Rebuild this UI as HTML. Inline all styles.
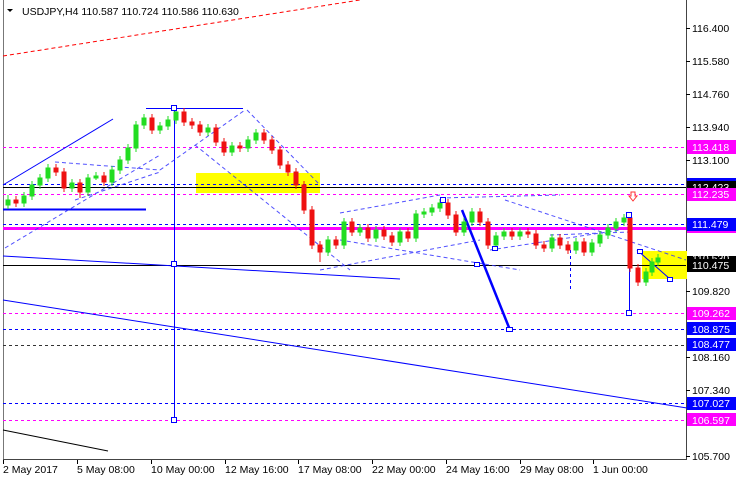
<!DOCTYPE html>
<html><head><meta charset="utf-8"><style>
html,body{margin:0;padding:0;background:#fff;width:736px;height:480px;overflow:hidden}
svg{display:block;font-family:"Liberation Sans",sans-serif}
</style></head><body>
<svg width="736" height="480" viewBox="0 0 736 480" xmlns="http://www.w3.org/2000/svg">
<rect width="736" height="480" fill="#fff"/>
<line x1="3.5" y1="0" x2="3.5" y2="460" stroke="#777"/>
<line x1="686.5" y1="0" x2="686.5" y2="460" stroke="#444"/>
<line x1="3" y1="459.5" x2="687" y2="459.5" stroke="#444"/>
<rect x="196" y="173" width="124" height="20" fill="#ffff00"/>
<rect x="642" y="251" width="45" height="28" fill="#ffff00"/>
<line x1="3" y1="56" x2="360" y2="0" stroke="#f00" stroke-dasharray="4,3"/>
<g>
<line x1="3" y1="147.5" x2="686" y2="147.5" stroke="#ff00ff" stroke-dasharray="3,3"/>
<line x1="3" y1="184.5" x2="686" y2="184.5" stroke="#0000ff" stroke-dasharray="3,3"/>
<line x1="3" y1="187.5" x2="686" y2="187.5" stroke="#000"/>
<line x1="3" y1="194.5" x2="686" y2="194.5" stroke="#ff00ff" stroke-dasharray="3,3"/>
<line x1="3" y1="224.5" x2="686" y2="224.5" stroke="#0000ff" stroke-dasharray="3,3"/>
<line x1="3" y1="228.5" x2="686" y2="228.5" stroke="#ff00ff" stroke-width="3"/>
<line x1="3" y1="265.5" x2="686" y2="265.5" stroke="#000"/>
<line x1="3" y1="313.5" x2="686" y2="313.5" stroke="#ff00ff" stroke-dasharray="3,3"/>
<line x1="3" y1="329.5" x2="686" y2="329.5" stroke="#0000ff" stroke-dasharray="3,3"/>
<line x1="3" y1="345.5" x2="686" y2="345.5" stroke="#333" stroke-dasharray="3,3"/>
<line x1="3" y1="403.5" x2="686" y2="403.5" stroke="#0000ff" stroke-dasharray="3,3"/>
<line x1="3" y1="420.5" x2="686" y2="420.5" stroke="#ff00ff" stroke-dasharray="3,3"/>
</g>
<g stroke="#0000ff" fill="none">
<line x1="3" y1="185" x2="113" y2="119"/>
<line x1="3" y1="256" x2="400" y2="279"/>
<line x1="3" y1="300" x2="687" y2="408"/>
<line x1="3" y1="209.5" x2="146" y2="209.5" stroke-width="2"/>
<line x1="146" y1="108.5" x2="243" y2="108.5"/>
<line x1="174.5" y1="108" x2="174.5" y2="420"/>
<line x1="629.5" y1="215" x2="629.5" y2="314"/>
<line x1="462" y1="210" x2="510" y2="330" stroke-width="2.5"/>
<line x1="637" y1="250" x2="670" y2="279"/>
<line x1="570.5" y1="250" x2="570.5" y2="292" stroke-dasharray="3,3"/>
</g>
<g stroke="#3333ff" fill="none" stroke-dasharray="4,3" opacity="0.85">
<line x1="5" y1="248" x2="160" y2="155"/>
<line x1="55" y1="162" x2="160" y2="170"/>
<line x1="75" y1="200" x2="160" y2="172"/>
<line x1="160" y1="170" x2="245" y2="110"/>
<line x1="247" y1="110" x2="320" y2="185"/>
<line x1="195" y1="145" x2="350" y2="270"/>
<line x1="340" y1="213" x2="440" y2="195"/>
<line x1="320" y1="270" x2="480" y2="240"/>
<line x1="340" y1="240" x2="520" y2="270"/>
<line x1="440" y1="198" x2="560" y2="195"/>
<line x1="505" y1="200" x2="686" y2="260"/>
<line x1="490" y1="250" x2="620" y2="230"/>
<line x1="550" y1="235" x2="630" y2="232"/>
</g>
<line x1="3" y1="430" x2="108" y2="451" stroke="#000"/>
<g stroke="#22dd22" fill="#22dd22">
<path fill="none" d="M8 195V209 M24 192V207 M32 181V200 M40 174V189 M48 164V182 M72 179V192 M88 174V196 M96 172V180 M112 166V186 M120 156V174 M128 144V164 M136 121V152 M144 114V129 M160 122V134 M168 116V130 M176 108V124 M208 124V136 M232 142V156 M248 136V152 M256 129V144 M328 236V256 M344 218V249 M360 224V236 M376 226V242 M400 228V246 M416 210V242 M424 208V218 M432 204V216 M440 199V212 M464 218V236 M472 208V226 M496 232V249 M504 228V240 M520 228V240 M552 234V252 M576 238V254 M592 239V256 M600 231V247 M608 224V239 M616 218V232 M624 214V226 M646 268V286 M652 258V276 M658 254V266"/>
<rect x="6" y="200" width="4" height="5"/><rect x="22" y="196" width="4" height="7"/><rect x="30" y="185" width="4" height="11"/><rect x="38" y="178" width="4" height="7"/><rect x="46" y="168" width="4" height="10"/><rect x="70" y="183" width="4" height="5"/><rect x="86" y="178" width="4" height="14"/><rect x="94" y="176" width="4" height="2"/><rect x="110" y="170" width="4" height="12"/><rect x="118" y="160" width="4" height="10"/><rect x="126" y="148" width="4" height="12"/><rect x="134" y="125" width="4" height="23"/><rect x="142" y="118" width="4" height="7"/><rect x="158" y="126" width="4" height="4"/><rect x="166" y="120" width="4" height="6"/><rect x="174" y="112" width="4" height="8"/><rect x="206" y="128" width="4" height="4"/><rect x="230" y="146" width="4" height="6"/><rect x="246" y="140" width="4" height="8"/><rect x="254" y="133" width="4" height="7"/><rect x="326" y="240" width="4" height="12"/><rect x="342" y="222" width="4" height="23"/><rect x="358" y="228" width="4" height="4"/><rect x="374" y="230" width="4" height="8"/><rect x="398" y="232" width="4" height="10"/><rect x="414" y="214" width="4" height="24"/><rect x="422" y="212" width="4" height="2"/><rect x="430" y="208" width="4" height="4"/><rect x="438" y="203" width="4" height="5"/><rect x="462" y="222" width="4" height="10"/><rect x="470" y="212" width="4" height="10"/><rect x="494" y="236" width="4" height="9"/><rect x="502" y="232" width="4" height="4"/><rect x="518" y="232" width="4" height="4"/><rect x="550" y="238" width="4" height="10"/><rect x="574" y="242" width="4" height="8"/><rect x="590" y="243" width="4" height="9"/><rect x="598" y="235" width="4" height="8"/><rect x="606" y="228" width="4" height="7"/><rect x="614" y="222" width="4" height="6"/><rect x="622" y="218" width="4" height="4"/><rect x="644" y="272" width="4" height="10"/><rect x="650" y="262" width="4" height="10"/><rect x="656" y="258" width="4" height="4"/>
</g>
<g stroke="#ee1111" fill="#ee1111">
<path fill="none" d="M16 196V207 M56 164V176 M64 168V192 M80 179V198 M104 172V186 M152 114V134 M184 108V126 M192 118V129 M200 121V136 M216 124V146 M224 138V156 M240 142V152 M264 129V144 M272 136V154 M280 146V169 M288 161V176 M296 168V189 M304 181V214 M312 206V249 M320 241V262 M336 236V249 M352 218V236 M368 224V242 M384 226V240 M392 232V246 M408 228V242 M448 199V219 M456 211V236 M480 208V226 M488 218V249 M512 228V240 M528 228V238 M536 230V249 M544 241V252 M560 234V249 M568 241V254 M584 238V256 M630 214V272 M638 264V286"/>
<rect x="14" y="200" width="4" height="3"/><rect x="54" y="168" width="4" height="4"/><rect x="62" y="172" width="4" height="16"/><rect x="78" y="183" width="4" height="9"/><rect x="102" y="176" width="4" height="6"/><rect x="150" y="118" width="4" height="12"/><rect x="182" y="112" width="4" height="10"/><rect x="190" y="122" width="4" height="3"/><rect x="198" y="125" width="4" height="7"/><rect x="214" y="128" width="4" height="14"/><rect x="222" y="142" width="4" height="10"/><rect x="238" y="146" width="4" height="2"/><rect x="262" y="133" width="4" height="7"/><rect x="270" y="140" width="4" height="10"/><rect x="278" y="150" width="4" height="15"/><rect x="286" y="165" width="4" height="7"/><rect x="294" y="172" width="4" height="13"/><rect x="302" y="185" width="4" height="25"/><rect x="310" y="210" width="4" height="35"/><rect x="318" y="245" width="4" height="7"/><rect x="334" y="240" width="4" height="5"/><rect x="350" y="222" width="4" height="10"/><rect x="366" y="228" width="4" height="10"/><rect x="382" y="230" width="4" height="6"/><rect x="390" y="236" width="4" height="6"/><rect x="406" y="232" width="4" height="6"/><rect x="446" y="203" width="4" height="12"/><rect x="454" y="215" width="4" height="17"/><rect x="478" y="212" width="4" height="10"/><rect x="486" y="222" width="4" height="23"/><rect x="510" y="232" width="4" height="4"/><rect x="526" y="232" width="4" height="2"/><rect x="534" y="234" width="4" height="11"/><rect x="542" y="245" width="4" height="3"/><rect x="558" y="238" width="4" height="7"/><rect x="566" y="245" width="4" height="5"/><rect x="582" y="242" width="4" height="10"/><rect x="628" y="218" width="4" height="50"/><rect x="636" y="268" width="4" height="14"/>
</g>
<g fill="#fff" stroke="#0000ff">
<rect x="171.5" y="105.5" width="5" height="5"/>
<rect x="171.5" y="261.5" width="5" height="5"/>
<rect x="171.5" y="417.5" width="5" height="5"/>
<rect x="626.5" y="212.5" width="5" height="5"/>
<rect x="626.5" y="310.5" width="5" height="5"/>
<rect x="506.5" y="327.5" width="6" height="4"/>
<rect x="474.5" y="262.5" width="5" height="4"/>
<rect x="440.5" y="197.5" width="5" height="5"/>
<rect x="492.5" y="246.5" width="5" height="4"/>
<rect x="667.5" y="277.5" width="5" height="4"/>
<rect x="637.5" y="249.5" width="5" height="4"/>
</g>
<path d="M631 192h4v4h2l-4 5l-4-5h2z" fill="#fff" stroke="#f33"/>
<g font-size="10.5" fill="#000">
<text x="692" y="32">116.400</text>
<text x="692" y="65">115.580</text>
<text x="692" y="98">114.760</text>
<text x="692" y="131">113.940</text>
<text x="692" y="164">113.100</text>
<text x="692" y="295">109.820</text>
<text x="692" y="361">108.160</text>
<text x="692" y="394">107.340</text>
<text x="692" y="460">105.700</text>
</g>
<g stroke="#000">
<line x1="686" y1="28.5" x2="690" y2="28.5"/><line x1="686" y1="61.5" x2="690" y2="61.5"/>
<line x1="686" y1="94.5" x2="690" y2="94.5"/><line x1="686" y1="127.5" x2="690" y2="127.5"/>
<line x1="686" y1="160.5" x2="690" y2="160.5"/><line x1="686" y1="291.5" x2="690" y2="291.5"/>
<line x1="686" y1="357.5" x2="690" y2="357.5"/><line x1="686" y1="390.5" x2="690" y2="390.5"/>
<line x1="686" y1="456.5" x2="690" y2="456.5"/>
</g>
<g font-size="10.5" fill="#fff">
<rect x="687" y="140" width="49" height="14" fill="#ff00ff"/><text x="692" y="151">113.418</text>
<rect x="687" y="178" width="49" height="6" fill="#0000ff"/>
<rect x="687" y="181" width="49" height="12" fill="#000"/><text x="692" y="191">112.423</text>
<rect x="687" y="188" width="49" height="13" fill="#ff00ff"/><text x="692" y="198">112.235</text>
<rect x="687" y="224" width="49" height="9" fill="#ff00ff"/>
<rect x="687" y="218" width="49" height="13" fill="#0000ff"/><text x="692" y="228">111.479</text>
<rect x="687" y="256" width="49" height="16" fill="#000"/><text x="692" y="262">110.530</text>
<rect x="687" y="259" width="49" height="13" fill="#000"/><text x="692" y="269">110.475</text>
<rect x="687" y="307" width="49" height="13" fill="#ff00ff"/><text x="692" y="317">109.262</text>
<rect x="687" y="322" width="49" height="13" fill="#0000ff"/><text x="692" y="333">108.875</text>
<rect x="687" y="338" width="49" height="13" fill="#0000ff"/><text x="692" y="348">108.477</text>
<rect x="687" y="397" width="49" height="13" fill="#0000ff"/><text x="692" y="407">107.027</text>
<rect x="687" y="413" width="49" height="13" fill="#ff00ff"/><text x="692" y="424">106.597</text>
</g>
<g stroke="#000">
<line x1="3.5" y1="460" x2="3.5" y2="464"/><line x1="77.5" y1="460" x2="77.5" y2="464"/>
<line x1="151.5" y1="460" x2="151.5" y2="464"/><line x1="225.5" y1="460" x2="225.5" y2="464"/>
<line x1="298.5" y1="460" x2="298.5" y2="464"/><line x1="372.5" y1="460" x2="372.5" y2="464"/>
<line x1="446.5" y1="460" x2="446.5" y2="464"/><line x1="520.5" y1="460" x2="520.5" y2="464"/>
<line x1="593.5" y1="460" x2="593.5" y2="464"/>
</g>
<g font-size="10.5" fill="#000">
<text x="3" y="473">2 May 2017</text><text x="77" y="473">5 May 08:00</text>
<text x="151" y="473">10 May 00:00</text><text x="225" y="473">12 May 16:00</text>
<text x="298" y="473">17 May 08:00</text><text x="372" y="473">22 May 00:00</text>
<text x="446" y="473">24 May 16:00</text><text x="520" y="473">29 May 08:00</text>
<text x="593" y="473">1 Jun 00:00</text>
</g>
<path d="M7 9 L13 9 L10 12 Z" fill="#000"/>
<text x="22" y="15" font-size="10.5" fill="#000">USDJPY,H4  110.587 110.724 110.586 110.630</text>
</svg>
</body></html>
